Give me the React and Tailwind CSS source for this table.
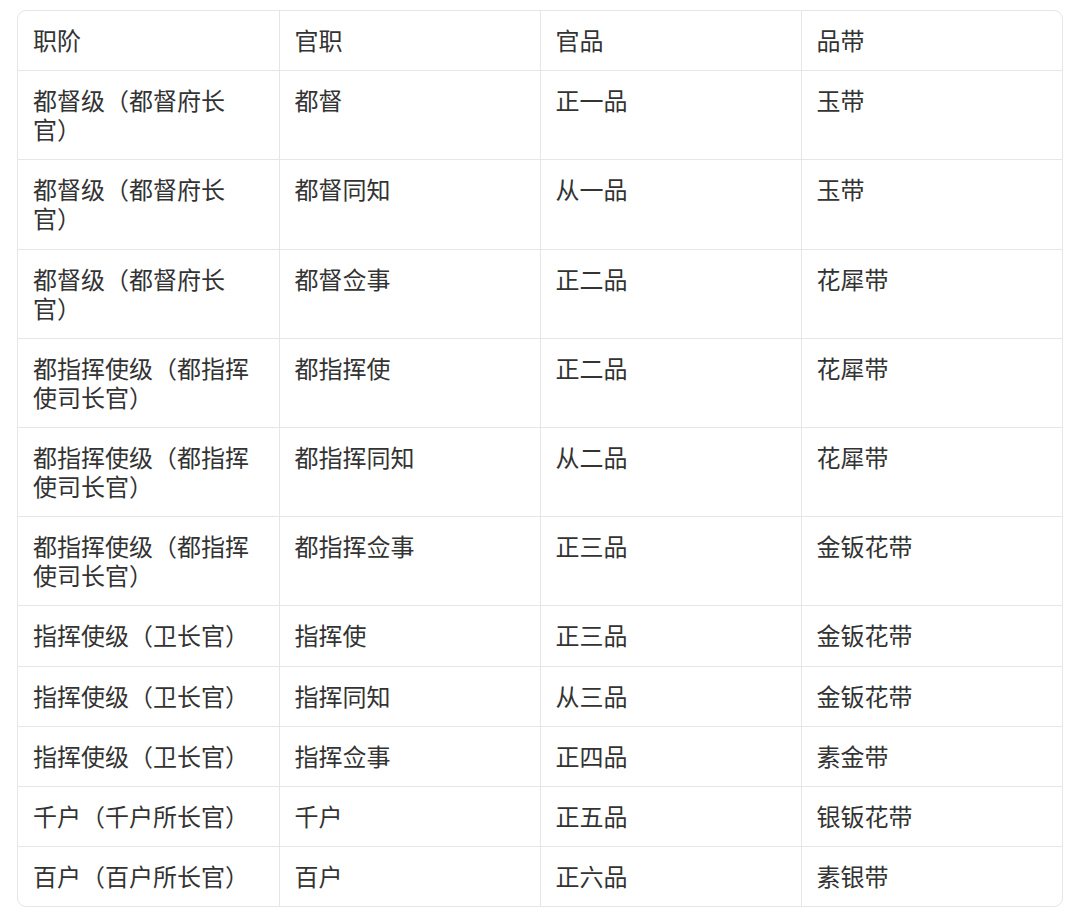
const headers = ['职阶', '官职', '官品', '品带'];

const rows = [
  ['都督级（都督府长官）', '都督', '正一品', '玉带'],
  ['都督级（都督府长官）', '都督同知', '从一品', '玉带'],
  ['都督级（都督府长官）', '都督佥事', '正二品', '花犀带'],
  ['都指挥使级（都指挥使司长官）', '都指挥使', '正二品', '花犀带'],
  ['都指挥使级（都指挥使司长官）', '都指挥同知', '从二品', '花犀带'],
  ['都指挥使级（都指挥使司长官）', '都指挥佥事', '正三品', '金钣花带'],
  ['指挥使级（卫长官）', '指挥使', '正三品', '金钣花带'],
  ['指挥使级（卫长官）', '指挥同知', '从三品', '金钣花带'],
  ['指挥使级（卫长官）', '指挥佥事', '正四品', '素金带'],
  ['千户（千户所长官）', '千户', '正五品', '银钣花带'],
  ['百户（百户所长官）', '百户', '正六品', '素银带'],
];

export default function App() {
  return (
    <div
      lang="zh-CN"
      className="min-h-[921px] bg-white pl-[17px] pr-[17px] pt-[10px] text-[#333] [text-spacing-trim:space-all]"
      style={{ fontFamily: '"Noto Sans CJK SC", sans-serif' }}
    >
      <div className="overflow-hidden rounded-[9px] border border-[#e5e5ea]">
        <table className="w-full table-fixed border-collapse text-[24px] leading-[29px]">
          <thead>
            <tr>
              {headers.map((h, i) => (
                <th
                  key={i}
                  className={`pl-[15px] pr-4 pt-[14px] pb-[16.2px] text-left font-normal border-b border-[#e5e5ea] ${i > 0 ? 'border-l' : ''}`}
                >
                  {h}
                </th>
              ))}
            </tr>
          </thead>
          <tbody>
            {rows.map((row, r) => (
              <tr key={r}>
                {row.map((cell, i) => (
                  <td
                    key={i}
                    className={`pl-[15px] pr-4 pt-[14px] pb-[16.2px] align-top border-[#e5e5ea] ${i > 0 ? 'border-l' : ''} ${r < rows.length - 1 ? 'border-b' : ''}`}
                  >
                    {cell}
                  </td>
                ))}
              </tr>
            ))}
          </tbody>
        </table>
      </div>
    </div>
  );
}
